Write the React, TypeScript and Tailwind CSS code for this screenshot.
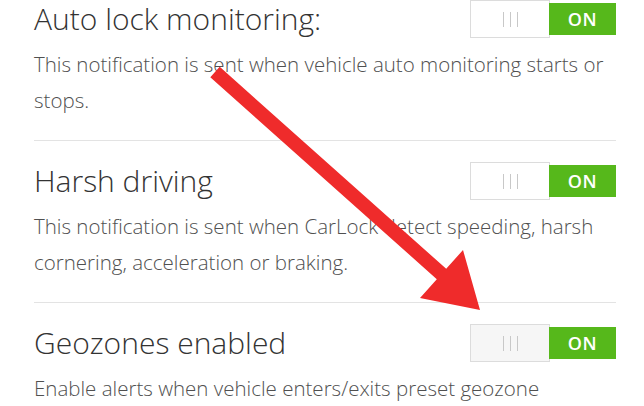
import React from "react";

type Row = { title: string; desc: string; shaded?: boolean };

const rows: Row[] = [
  {
    title: "Auto lock monitoring:",
    desc: "This notification is sent when vehicle auto monitoring starts or stops.",
  },
  {
    title: "Harsh driving",
    desc: "This notification is sent when CarLock detect speeding, harsh cornering, acceleration or braking.",
  },
  {
    title: "Geozones enabled",
    desc: "Enable alerts when vehicle enters/exits preset geozone",
    shaded: true,
  },
];

function Toggle({ shaded }: { shaded?: boolean }) {
  return (
    <div className="flex items-center shrink-0">
      <div
        className={`w-[80px] h-[38px] border border-[#dcdcdc] flex items-center justify-center gap-[6px] ${
          shaded ? "bg-[#f6f6f6]" : "bg-white"
        }`}
      >
        <div className="w-px h-[15px] bg-[#c8c8c8]" />
        <div className="w-px h-[15px] bg-[#c8c8c8]" />
        <div className="w-px h-[15px] bg-[#c8c8c8]" />
      </div>
      <div className="w-[67px] h-[32px] -ml-px bg-[#56b81b] flex items-center justify-center text-white text-[18px] font-semibold tracking-[0.5px]">
        ON
      </div>
    </div>
  );
}

export default function App() {
  return (
    <div
      className="relative w-[644px] h-[406px] overflow-hidden bg-white"
      style={{ fontFamily: '"Open Sans", "Liberation Sans", sans-serif' }}
    >
      <div className="pl-[34px] w-[616px]">
        {rows.map((r, i) => (
          <div
            key={r.title}
            className={`${i === 0 ? "pt-0" : "pt-[21px]"} pb-[22px] border-b border-[#e3e3e3]`}
          >
            <div className="flex items-center justify-between h-[38px]">
              <div className="text-[30px] font-light text-[#333] leading-[38px] whitespace-nowrap">
                {r.title}
              </div>
              <Toggle shaded={r.shaded} />
            </div>
            <div className="mt-[8px] text-[20.5px] font-light leading-[36px] text-[#505050] pr-[4px]">
              {r.desc}
            </div>
          </div>
        ))}
      </div>
      <svg
        className="absolute left-0 top-0 pointer-events-none"
        width="644"
        height="406"
        viewBox="0 0 644 406"
      >
        <polygon
          points="210.3,77.2 219.7,66.8 446.2,268.8 463,250 480,310 420,298 436.8,279.2"
          fill="#ef2b2b"
        />
      </svg>
    </div>
  );
}
